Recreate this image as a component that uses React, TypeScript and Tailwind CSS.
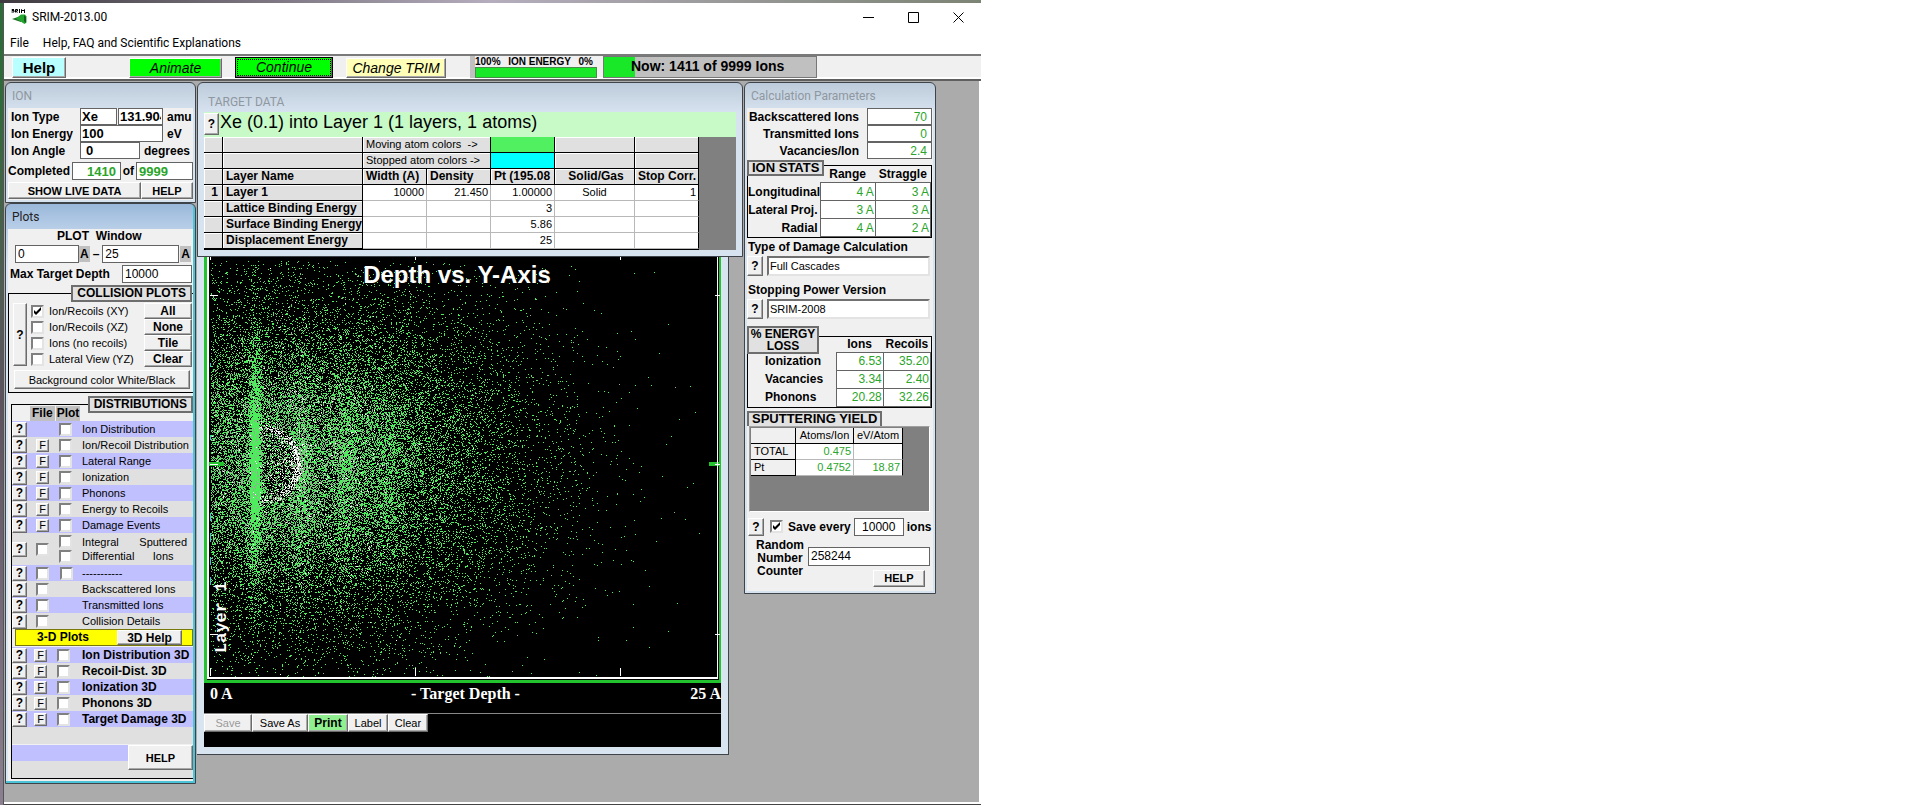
import type { ReactNode } from "react";

const raised =
  "border border-t-white border-l-white border-r-[#6b6b6b] border-b-[#6b6b6b] shadow-[inset_-1px_-1px_0_#a8a8a8] bg-[#f0f0f0]";
const field = "border border-[#646464] bg-white px-1 outline-none min-w-0";
const small = "text-[11px] font-normal";
const tag = "border-2 border-[#6e6e6e] bg-[#e1e1e1] leading-3";

function Win({ title, active, className = "", bodyPad = "px-[2px] pb-[2px]", titleClass = "h-[25px]", children }: {
  title: string; active?: boolean; className?: string; bodyPad?: string; titleClass?: string; children: ReactNode;
}) {
  return (
    <section
      className={`flex flex-col rounded-t-md border border-[#3f444a] ${bodyPad} ${active ? "bg-gradient-to-b from-[#9ab8da] via-[#b9cfe8] via-[25px] to-[#d9e6f3] to-[60px]" : "bg-gradient-to-b from-[#bccbda] to-[#d8e3f0] to-[30px]"} ${className}`}
    >
      <h2 className={`flex shrink-0 items-center pl-1 font-[Roboto,sans-serif] text-[12px] font-normal ${active ? "text-[#222]" : "text-[#8f979f]"} ${titleClass}`}>{title}</h2>
      {children}
    </section>
  );
}

function Check({ label, checked }: { label: string; checked?: boolean }) {
  return (
    <span className="relative block size-[13px] shrink-0">
      <input
        type="checkbox"
        aria-label={label}
        defaultChecked={checked}
        className="peer block size-[13px] appearance-none border-2 border-t-[#808080] border-l-[#808080] border-r-[#e3e3e3] border-b-[#e3e3e3] bg-white"
      />
      <svg viewBox="0 0 13 13" className="pointer-events-none absolute inset-0 hidden size-[13px] peer-checked:block">
        <path d="M3 5v3l2 2 5-5V2L5 7z" fill="#000" />
      </svg>
    </span>
  );
}

function Q({ className = "w-[15px] h-[15px]" }: { className?: string }) {
  return (
    <button type="button" aria-label="Explain" className={`${raised} flex shrink-0 items-center justify-center text-[12px] leading-3 font-bold ${className}`}>?</button>
  );
}

function IonPanel() {
  return (
    <Win title="ION" className="h-[121px]">
      <div className="flex flex-1 flex-col bg-[#f0f0f0] text-[12px] font-bold">
        <div className="grid grid-cols-[72px_minmax(0,1fr)] items-center">
          <label htmlFor="ion-type" className="pl-[3px]">Ion Type</label>
          <div className="flex items-center gap-px">
            <input id="ion-type" defaultValue="Xe" className={`${field} h-[17px] w-[37px] px-px text-[13px]`} />
            <input aria-label="Ion mass" defaultValue="131.904" className={`${field} h-[17px] w-[45px] px-px text-[13px]`} />
            <span className="pl-[3px]">amu</span>
          </div>
          <label htmlFor="ion-energy" className="pl-[3px]">Ion Energy</label>
          <div className="flex items-center gap-1">
            <input id="ion-energy" defaultValue="100" className={`${field} h-[17px] w-[83px] px-px text-[13px]`} />
            <span>eV</span>
          </div>
          <label htmlFor="ion-angle" className="pl-[3px]">Ion Angle</label>
          <div className="flex items-center gap-1">
            <input id="ion-angle" defaultValue="0" className={`${field} h-[17px] w-[60px] pl-[5px] text-[13px]`} />
            <span>degrees</span>
          </div>
        </div>
        <div className="mt-[3px] flex items-center justify-between">
          <label htmlFor="completed">Completed</label>
          <input id="completed" defaultValue="1410" className={`${field} h-[18px] w-[49px] px-0 text-right text-[13px] text-[#2aa52a]`} />
          <span>of</span>
          <input aria-label="Total ions" defaultValue="9999" className={`${field} h-[18px] w-[57px] pl-[2px] text-[13px] text-[#2aa52a]`} />
        </div>
        <div className="mt-[2px] flex text-[11px]">
          <button type="button" className={`${raised} h-[17px] flex-1 leading-3`}>SHOW LIVE DATA</button>
          <button type="button" className={`${raised} h-[17px] w-[52px] leading-3`}>HELP</button>
        </div>
      </div>
    </Win>
  );
}

const collisionPlots = ["Ion/Recoils (XY)", "Ion/Recoils (XZ)", "Ions (no recoils)", "Lateral View (YZ)"];
const distributions = [
  "Ion Distribution", "Ion/Recoil Distribution", "Lateral Range", "Ionization", "Phonons", "Energy to Recoils", "Damage Events",
];
const plots3d = ["Ion Distribution 3D", "Recoil-Dist. 3D", "Ionization 3D", "Phonons 3D", "Target Damage 3D"];

const rowCols = "grid grid-cols-[17px_24px_29px_minmax(0,1fr)] items-center";

function FButton() {
  return <button type="button" aria-label="File" className={`${raised} flex size-[13px] items-center justify-center ${small}`}>F</button>;
}

function PlotsPanel() {
  return (
    <Win title="Plots" active className="h-[581px] shadow-[inset_-2px_-2px_0_#4cc3d6]">
      <div className="flex flex-1 flex-col bg-[#f0f0f0] text-[12px] font-bold">
        <div className="h-4 pl-[49px] leading-[14px] whitespace-pre">PLOT  Window</div>
        <div className="flex h-[18px] items-center pl-[7px]">
          <input aria-label="Plot window start" defaultValue="0" className={`${field} text-[12px] font-normal h-[18px] w-[64px] pl-[2px]`} />
          <span className="bg-[#c0c0c0] px-px">A</span>
          <span className="px-[3px]">–</span>
          <input aria-label="Plot window end" defaultValue="25" className={`${field} text-[12px] font-normal h-[18px] w-[77px] pl-[2px]`} />
          <span className="ml-px bg-[#c0c0c0] px-px">A</span>
        </div>
        <div className="mt-[2px] flex items-center justify-between pr-px pl-[2px]">
          <label htmlFor="max-depth">Max Target Depth</label>
          <input id="max-depth" defaultValue="10000" className={`${field} text-[12px] font-normal h-[18px] w-[70px] pl-[2px]`} />
        </div>
        <div className="mt-[2px] grid grid-cols-1">
          <div className="col-start-1 row-start-1 mt-2 h-[100px] border border-r-0 border-black" />
          <div className="col-start-1 row-start-1 flex flex-col">
            <h3 className={`${tag} mr-px h-[17px] self-end px-1`}>COLLISION PLOTS</h3>
            <div className="mt-px flex pr-px pl-[5px]">
              <Q className="mr-1 h-[63px] w-[14px]" />
              <ul className={`flex flex-1 flex-col ${small}`}>
                {collisionPlots.map((p, i) => (
                  <li key={p} className="flex h-4 items-center gap-[5px] whitespace-nowrap">
                    <Check label={p} checked={i === 0} />
                    {p}
                  </li>
                ))}
              </ul>
              <div className="flex w-[48px] flex-col">
                {["All", "None", "Tile", "Clear"].map((b) => (
                  <button key={b} type="button" className={`${raised} h-4 leading-3`}>{b}</button>
                ))}
              </div>
            </div>
            <button type="button" className={`${raised} ${small} mt-[3px] ml-[6px] mr-[3px] h-[19px] leading-4`}>Background color White/Black</button>
          </div>
        </div>
        <div className="mt-[3px] grid flex-1 grid-cols-1">
          <div className="col-start-1 row-start-1 mt-2 ml-[3px] mb-[2px] border border-r-0 border-black bg-[#f0f0f0]" />
          <div className="col-start-1 row-start-1 mb-[3px] ml-1 flex flex-col">
            <div className="flex h-[25px] items-start justify-between">
              <div className="ml-[18px] flex gap-px self-end leading-[15px]">
                <span className="bg-[#c0c0c0] px-[2px]">File</span>
                <span className="bg-[#c0c0c0] px-px">Plot</span>
              </div>
              <h3 className={`${tag} z-10 h-[17px] px-1`}>DISTRIBUTIONS</h3>
            </div>
            <div className={small}>
              {distributions.map((d, i) => (
                <div key={d} className={`${rowCols} h-4 whitespace-nowrap ${i % 2 === 0 ? "bg-[#c0c0ff]" : "bg-[#e0e0e0]"}`}>
                  <Q />
                  <span className="pl-[7px]">{i > 0 && <FButton />}</span>
                  <span className="pl-[6px]"><Check label={d} /></span>
                  <span>{d}</span>
                </div>
              ))}
              <div className={`${rowCols} h-8 bg-[#e0e0e0]`}>
                <Q />
                <span className="pl-[7px]"><Check label="Sputtered ions file" /></span>
                <span className="flex flex-col gap-[2px] pl-[6px]"><Check label="Integral" /><Check label="Differential" /></span>
                <span className="flex justify-between pr-[6px] text-center leading-[14px]">
                  <span className="text-left">Integral<br />Differential</span>
                  <span>Sputtered<br />Ions</span>
                </span>
              </div>
              <div className={`${rowCols} h-4 bg-[#c0c0ff]`}>
                <Q />
                <span className="pl-[7px]"><Check label="Unused file" /></span>
                <span className="pl-[7px]"><Check label="Unused plot" /></span>
                <span>-----------</span>
              </div>
              {["Backscattered Ions", "Transmitted Ions", "Collision Details"].map((d, i) => (
                <div key={d} className={`${rowCols} h-4 ${i === 1 ? "bg-[#c0c0ff]" : "bg-[#e0e0e0]"}`}>
                  <Q />
                  <span className="pl-[7px]"><Check label={d} /></span>
                  <span />
                  <span>{d}</span>
                </div>
              ))}
            </div>
            <div className="ml-[3px] flex h-[17px] items-stretch border border-[#77770a] bg-[#ffff00]">
              <span className="w-[101px] pl-[21px] leading-[14px]">3-D Plots</span>
              <button type="button" className={`${raised} w-[65px] leading-3`}>3D Help</button>
            </div>
            <div className="mt-px">
              {plots3d.map((d, i) => (
                <div key={d} className={`${rowCols} h-4 whitespace-nowrap ${i % 2 === 0 ? "bg-[#c0c0ff]" : "bg-[#e0e0e0]"}`}>
                  <Q />
                  <span className="pl-[5px]"><FButton /></span>
                  <span className="pl-1"><Check label={d} /></span>
                  <span>{d}</span>
                </div>
              ))}
            </div>
            <div className="h-[17px] bg-[#e0e0e0]" />
            <div className="mt-px flex flex-1 bg-[#e0e0e0]">
              <div className="h-4 flex-1 bg-[#c0c0ff]" />
              <button type="button" className={`${raised} h-[25px] w-[65px] text-[11px]`}>HELP</button>
            </div>
          </div>
        </div>
      </div>
    </Win>
  );
}

const headCell = "h-4 border-r border-b border-black bg-[#e0e0e0] py-0 pr-0 pl-[3px] text-left font-bold shadow-[inset_1px_1px_0_#fff]";
const dataCell = `h-4 border-r border-b border-[#b8b8b8] bg-white px-[2px] py-0 text-right ${small}`;

function TargetPanel() {
  const rows: [string, string, string[]][] = [
    ["1", "Layer 1", ["10000", "21.450", "1.00000", "Solid", "1"]],
    ["", "Lattice Binding Energy", ["", "", "3", "", ""]],
    ["", "Surface Binding Energy", ["", "", "5.86", "", ""]],
    ["", "Displacement Energy", ["", "", "25", "", ""]],
  ];
  return (
    <Win title="TARGET DATA" className="h-[175px] w-[546px]" bodyPad="px-[6px]" titleClass="h-[29px] pt-[8px]">
      <div className="flex h-[25px] items-start bg-[#c8fac8] pt-px">
        <Q className="h-[22px] w-[15px]" />
        <p className="pl-px text-[18px] leading-[18px]">Xe (0.1) into Layer 1 (1 layers, 1 atoms)</p>
      </div>
      <div className="bg-[#808080]">
        <table className="w-[495px] table-fixed border-separate border-spacing-0 border-b border-black text-[12px] leading-[15px] whitespace-nowrap">
          <colgroup>
            <col className="w-[19px]" /><col className="w-[140px]" /><col className="w-[64px]" /><col className="w-[64px]" />
            <col className="w-[64px]" /><col className="w-[80px]" /><col className="w-[64px]" />
          </colgroup>
          <thead>
            <tr>
              <td className={headCell} /><td className={headCell} />
              <th colSpan={2} className={headCell}><span className={small}>Moving atom colors&nbsp; -&gt;</span></th>
              <td className="h-4 border-r border-b border-black bg-[#50f060] p-0" />
              <td className={headCell} /><td className={headCell} />
            </tr>
            <tr>
              <td className={headCell} /><td className={headCell} />
              <th colSpan={2} className={headCell}><span className={small}>Stopped atom colors -&gt;</span></th>
              <td className="h-4 border-r border-b border-black bg-[#00ffff] p-0" />
              <td className={headCell} /><td className={headCell} />
            </tr>
            <tr>
              <td className={headCell} />
              <th className={headCell}>Layer Name</th>
              <th className={headCell}>Width (A)</th>
              <th className={headCell}>Density</th>
              <th className={`${headCell} overflow-hidden`}>Pt (195.08</th>
              <th className={`${headCell} !text-center`}>Solid/Gas</th>
              <th className={headCell}>Stop Corr.</th>
            </tr>
          </thead>
          <tbody>
            {rows.map(([n, name, cells]) => (
              <tr key={name}>
                <th className={`${headCell} !pr-1 !text-right`}>{n}</th>
                <th className={headCell}>{name}</th>
                {cells.map((c, i) => (
                  <td key={i} className={`${dataCell} ${i === 3 ? "!text-center" : ""} ${i === 4 ? "!border-r-black" : ""}`}>{c}</td>
                ))}
              </tr>
            ))}
          </tbody>
        </table>
      </div>
    </Win>
  );
}

const PLOT_W = 517;
const PLOT_H = 426;

/* Cascade density: lattice planes appear as vertical bands over a broad cloud. */
function scatter() {
  let seed = 20130711;
  const rnd = () => {
    seed = (seed + 0x6d2b79f5) | 0;
    let t = Math.imul(seed ^ (seed >>> 15), 1 | seed);
    t = (t + Math.imul(t ^ (t >>> 7), 61 | t)) ^ t;
    return ((t ^ (t >>> 14)) >>> 0) / 4294967296;
  };
  const bands = [[46, 4, 0.62, 118], [92, 7, 0.26, 100], [137, 8, 0.24, 92], [177, 11, 0.16, 84]];
  let green = "";
  let gray = "";
  let white = "";
  for (let y = 4; y < PLOT_H - 6; y++) {
    const v = y - 207;
    const tail = Math.exp(-Math.pow(Math.abs(v) / 165, 3.2));
    for (let x = 7; x < PLOT_W - 7; x++) {
      const u = x - 5;
      const fall = Math.exp(-Math.pow(Math.abs(v) / 112, 2.2));
      const reach = Math.exp(-Math.pow(u / 240, 2.7));
      let p = 0.5 * reach * fall * (0.7 + 0.3 * Math.min(1, u / 60)) + 0.04 * reach * tail;
      p += 0.018 * Math.exp(-Math.pow(Math.hypot(u - 60, v) / 215, 5));
      p += 0.018 * Math.exp(-Math.pow(Math.hypot(u - 60, v * 1.15) / 285, 6));
      p += 0.0014 * Math.exp(-Math.pow(Math.hypot(u, v * 1.3) / 430, 10));
      for (const [c, s, a, h] of bands) {
        p += a * Math.exp(-((u - c) * (u - c)) / (2 * s * s)) * Math.exp(-(v * v) / (h * h));
      }
      const r = Math.hypot((u - 50) / 42, v / 40);
      const ring = u > 50 ? Math.exp(-Math.pow((r - 0.93) / 0.08, 2)) : 0;
      const inside = u > 53 && r < 1 ? (u - 53) / 41 : 0;
      if (u > 53 && r < 0.9) p *= 0.8;
      const k = rnd();
      if (k < p + ring * 0.08) {
        const near = Math.exp(-Math.pow(Math.hypot(u - 75, v * 0.9) / 110, 2));
        const offBand = Math.abs(u - 46) < 7 ? 0.3 : 1;
        const j = rnd();
        const dot = `M${x} ${y}h1`;
        if (j < 0.06 * near * offBand + ring * 0.35 + inside * 0.3) white += dot;
        else if (j < 0.07 + 0.36 * near * offBand + ring * 0.45 + inside * 0.3) gray += dot;
        else green += dot;
      }
    }
  }
  return { green, gray, white };
}
const dots = scatter();

function PlotPanel() {
  return (
    <section className="flex h-[498px] w-[532px] flex-col border-r border-b border-[#3f444a] bg-[#d9e4f1] px-[7px] pb-[7px]">
      <div className="flex flex-1 flex-col bg-black">
        <svg viewBox={`0 0 ${PLOT_W} ${PLOT_H}`} className="block w-full" role="img" aria-label="Depth vs. Y-Axis">
          <g shapeRendering="crispEdges" transform="translate(0 .5)" fill="none">
            <path d={dots.green} stroke="#4cee5c" />
            <path d={dots.gray} stroke="#93ad90" />
            <path d={dots.white} stroke="#fff" />
          </g>
          <g shapeRendering="crispEdges">
            <path d="M0 0h3v426h-3zM515 0h2v426h-2zM0 423h517v3h-517zM5 205h15v4h-15zM505 205h12v4h-12z" fill="#22c32e" />
            <path d="M3 0h2v422h-2zM513 0h1v422h-1zM3 420h511v2h-511zM6 411h1v8h-1zM211 411h1v8h-1zM416 411h1v8h-1zM6 0h1v3h-1zM211 0h1v3h-1zM416 0h1v3h-1zM6 38h8v1h-8zM511 38h5v1h-5zM6 207h8v1h-8zM511 207h5v1h-5zM6 377h8v1h-8zM511 377h5v1h-5z" fill="#fff" />
            <path d="M6 106v4M6 178v5M6 256v8M6 276v9M6 300v8M6 320v8" stroke="#35c8d8" />
          </g>
          <text x="253" y="26" textAnchor="middle" className="fill-white font-['Liberation_Sans',sans-serif] text-[24px] font-bold">Depth vs. Y-Axis</text>
          <text transform="translate(22 396) rotate(-90)" className="fill-white font-['Liberation_Mono',monospace] text-[17px] font-bold">Layer 1</text>
        </svg>
        <div className="grid h-[30px] grid-cols-[1fr_auto_1fr] pl-[6px] font-['Liberation_Serif',serif] text-[16px] leading-[21px] font-bold text-white">
          <span>0 A</span>
          <span className="text-center">- Target Depth -</span>
          <span className="text-right">25 A</span>
        </div>
        <div className={`flex border-t border-[#888] ${small}`}>
          <button type="button" disabled className={`${raised} h-[18px] w-[48px] leading-[15px] text-[#9a9a9a]`}>Save</button>
          <button type="button" className={`${raised} h-[18px] w-[56px] leading-[15px]`}>Save As</button>
          <button type="button" className={`${raised} h-[18px] w-[40px] !bg-[#90f090] text-[12px] leading-[15px] !font-bold`}>Print</button>
          <button type="button" className={`${raised} h-[18px] w-[40px] leading-[15px]`}>Label</button>
          <button type="button" className={`${raised} h-[18px] w-[40px] leading-[15px]`}>Clear</button>
        </div>
      </div>
    </section>
  );
}

const greenCell = "border border-[#646464] bg-white p-0 pr-px text-right text-[12px] font-normal text-[#2aa52a]";
const sunken = "border-2 border-t-[#707070] border-l-[#707070] border-r-[#e3e3e3] border-b-[#e3e3e3] bg-white px-px";

function CalcPanel() {
  return (
    <Win title="Calculation Parameters" className="h-[512px] w-[192px]">
      <div className="flex flex-1 flex-col bg-[#f0f0f0] text-[12px] font-bold">
        {[["Backscattered Ions", "70"], ["Transmitted Ions", "0"], ["Vacancies/Ion", "2.4"]].map(([l, v]) => (
          <div key={l} className="flex h-[17px] items-center justify-end gap-2 pr-px">
            <label htmlFor={l}>{l}</label>
            <input id={l} defaultValue={v} className={`${field} h-[17px] w-[65px] px-0 text-right font-normal text-[#2aa52a]`} />
          </div>
        ))}
        <div className="mt-px mr-px grid grid-cols-1">
          <h3 className={`${tag} z-10 col-start-1 row-start-1 h-4 self-start justify-self-start px-[3px] text-[13px]`}>ION STATS</h3>
          <div className="col-start-1 row-start-1 mt-[5px] border border-black">
            <table className="w-full table-fixed border-collapse leading-4">
              <colgroup><col className="w-[72px]" /><col /><col /></colgroup>
              <thead>
                <tr className="h-4"><td className="p-0" /><th className="p-0">Range</th><th className="p-0">Straggle</th></tr>
              </thead>
              <tbody>
                {[["Longitudinal", "4 A", "3 A"], ["Lateral Proj.", "3 A", "3 A"], ["Radial", "4 A", "2 A"]].map(([l, a, b]) => (
                  <tr key={l} className="h-[18px]">
                    <th className="p-0 pr-[2px] text-right whitespace-nowrap">{l}</th>
                    <td className={greenCell}>{a}</td>
                    <td className={greenCell}>{b}</td>
                  </tr>
                ))}
              </tbody>
            </table>
          </div>
        </div>
        <label htmlFor="damage" className="pl-px leading-[18px]">Type of Damage Calculation</label>
        <div className="flex gap-1 pr-[3px]">
          <Q className="h-5 w-4" />
          <input id="damage" defaultValue="Full Cascades" className={`${sunken} ${small} h-5 min-w-0 flex-1`} />
        </div>
        <label htmlFor="stopping" className="mt-[5px] pl-px leading-[18px]">Stopping Power Version</label>
        <div className="flex gap-1 pr-[3px]">
          <Q className="h-5 w-4" />
          <input id="stopping" defaultValue="SRIM-2008" className={`${sunken} ${small} h-5 min-w-0 flex-1`} />
        </div>
        <div className="mt-[7px] mr-px grid grid-cols-1">
          <h3 className={`${tag} z-10 col-start-1 row-start-1 w-[72px] self-start justify-self-start text-center whitespace-nowrap`}>% ENERGY<br />LOSS</h3>
          <div className="col-start-1 row-start-1 mt-[10px] border border-black">
            <table className="w-full table-fixed border-collapse leading-4">
              <colgroup><col className="w-[88px]" /><col /><col /></colgroup>
              <thead>
                <tr className="h-[15px] leading-[14px]"><td className="p-0" /><th className="p-0">Ions</th><th className="p-0">Recoils</th></tr>
              </thead>
              <tbody>
                {[["Ionization", "6.53", "35.20"], ["Vacancies", "3.34", "2.40"], ["Phonons", "20.28", "32.26"]].map(([l, a, b]) => (
                  <tr key={l} className="h-[18px]">
                    <th className="p-0 pl-[17px] text-left">{l}</th>
                    <td className={greenCell}>{a}</td>
                    <td className={greenCell}>{b}</td>
                  </tr>
                ))}
              </tbody>
            </table>
          </div>
        </div>
        <h3 className={`${tag} mt-[3px] h-[15px] self-start border-b-0 px-[3px] text-[13px]`}>SPUTTERING YIELD</h3>
        <div className="mr-[3px] ml-[2px] h-[86px] border border-t-[#a0a0a0] border-l-[#a0a0a0] border-r-white border-b-white bg-[#808080] pt-px pl-px">
          <table className={`w-[152px] table-fixed border-separate border-spacing-0 ${small} leading-[15px]`}>
            <colgroup><col className="w-[45px]" /><col className="w-[58px]" /><col className="w-[49px]" /></colgroup>
            <thead>
              <tr className="bg-[#f0f0f0]">
                <td className="h-4 border-r border-b border-black p-0" />
                <th className="h-4 border-r border-b border-black p-0 font-normal">Atoms/Ion</th>
                <th className="h-4 border-r border-b border-black p-0 font-normal">eV/Atom</th>
              </tr>
            </thead>
            <tbody>
              {[["TOTAL", "0.475", ""], ["Pt", "0.4752", "18.87"]].map(([l, a, b]) => (
                <tr key={l}>
                  <th className="h-4 border-r border-b border-black bg-[#f0f0f0] p-0 pl-[3px] text-left font-normal">{l}</th>
                  <td className="h-4 border-r border-b border-r-[#b8b8b8] border-b-[#b8b8b8] bg-white p-0 pr-[2px] text-right text-[#2aa52a]">{a}</td>
                  <td className="h-4 border-r border-b border-r-black border-b-[#b8b8b8] bg-white p-0 pr-[2px] text-right text-[#2aa52a]">{b}</td>
                </tr>
              ))}
            </tbody>
          </table>
        </div>
        <div className="mt-[6px] flex h-[18px] items-center pl-px">
          <Q className="h-[18px] w-4" />
          <span className="ml-[6px]"><Check label="Save every" checked /></span>
          <label htmlFor="save-every" className="ml-[5px] whitespace-nowrap">Save every</label>
          <input id="save-every" defaultValue="10000" className={`${field} mx-[3px] h-[18px] w-[50px] text-center text-[12px] font-normal`} />
          <span>ions</span>
        </div>
        <div className="mt-[3px] flex items-center pr-[3px] pl-[8px]">
          <label htmlFor="counter" className="w-[50px] text-center leading-[13px]">Random<br />Number<br />Counter</label>
          <input id="counter" defaultValue="258244" className={`${field} mb-1 ml-[3px] h-[19px] flex-1 pl-[2px] text-[12px] font-normal`} />
        </div>
        <button type="button" className={`${raised} -mt-2 mr-2 h-[17px] w-[52px] self-end text-[11px] leading-3`}>HELP</button>
      </div>
    </Win>
  );
}

function Toolbar() {
  return (
    <div className="flex h-[27px] items-start border-t-2 border-b-2 border-t-[#7a7a7a] border-b-[#5f5f5f] bg-[#f0f0f0] shadow-[inset_0_-2px_0_#fff]">
      <button type="button" className={`${raised} mt-px ml-2 h-[21px] w-[54px] !bg-[#b8ffff] text-[15px] leading-4 font-bold`}>Help</button>
      <button type="button" className={`${raised} mt-[2px] ml-[63px] h-[20px] w-[93px] !bg-[#00ff00] text-[14px] leading-4 italic`}>Animate</button>
      <button type="button" className="mt-px ml-[13px] h-[21px] w-[98px] border border-black bg-[#00ff00] p-px text-[14px] italic shadow-[inset_-1px_-1px_0_#6b6b6b]">
        <span className="block h-[17px] border border-dotted border-black leading-[15px]">Continue</span>
      </button>
      <button type="button" className={`${raised} mt-[2px] ml-[13px] h-[20px] w-[100px] !bg-[#ffffb8] text-[14px] leading-4 italic`}>Change TRIM</button>
      <div className="ml-[24px] w-[128px] border-l-[5px] border-[#c0c0c0] pr-px">
        <div className="flex justify-between pr-1 text-[10px] leading-[11px] font-bold"><span>100%</span><span>ION ENERGY</span><span>0%</span></div>
        <div className="h-[11px] border border-[#4a8a4a] bg-[#18e828]" />
      </div>
      <div className="ml-[5px] flex h-[22px] w-[214px] border border-[#777] bg-[#c0c0c0]">
        <div className="h-full w-[31px] shrink-0 bg-[#18e828]" />
        <span className="-ml-1 text-[14px] leading-[19px] font-bold whitespace-nowrap">Now: 1411 of 9999 Ions</span>
      </div>
    </div>
  );
}

export default function App() {
  return (
    <div className="min-h-screen bg-white font-['Liberation_Sans',Arial,sans-serif] leading-4 text-black">
      <div className="flex min-h-screen w-[51.25%] min-w-[960px] flex-col bg-gradient-to-r from-[#3f3a40] via-[#b5adbd] to-[#7c8474] pt-[3px]">
        <div className="flex flex-1 bg-gradient-to-b from-[#2d6b38] from-[100px] via-[#5d5260] to-[#8a8090] pl-[3px]">
          <div className="flex flex-1 flex-col border-l border-[#555] bg-white">
            <header className="flex h-[28px] items-center pl-[7px] font-[Roboto,sans-serif] text-[12px]">
              <svg viewBox="0 0 16 16" className="mr-[5px] size-4" aria-hidden="true">
                <path d="M3 .5H1v1h2v1.500H.5M4.500 3.500V.5h2v1.500h-2l2 1.500M8.500 0v4M10.500 4V.5l1.500 1.500 1.500-1.500V4" stroke="#000" strokeWidth="1" fill="none" />
                <path d="M1 10l9-3v6z" fill="#1d6b23" />
                <path d="M5 9.500 10 5.500h4l1.500 2v6l-2 1.500z" fill="#21a52e" />
                <path d="M13 6l2 2v6l-2-2z" fill="#135c1b" />
              </svg>
              <h1 className="flex-1">SRIM-2013.00</h1>
              <div className="flex gap-[34px] pr-[17px]">
                {[["Minimize", "M0 5.500h11"], ["Maximize", "M.5.500h10v10h-10z"], ["Close", "M.5.500l10 10M10.500.500l-10 10"]].map(([l, d]) => (
                  <button key={l} type="button" aria-label={l}>
                    <svg viewBox="0 0 11 11" className="block size-[11px]"><path d={d} stroke="#000" fill="none" /></svg>
                  </button>
                ))}
              </div>
            </header>
            <nav className="flex h-[23px] items-center gap-[14px] pl-[6px] font-[Roboto,sans-serif] text-[12px]">
              <a href="#file">File</a>
              <a href="#help">Help, FAQ and Scientific Explanations</a>
            </nav>
            <Toolbar />
            <main className="flex flex-1 items-start gap-px border-r-2 border-b-2 border-white bg-[#ababab] pt-px pl-px">
              <div className="flex w-[191px] flex-col">
                <IonPanel />
                <PlotsPanel />
              </div>
              <div className="flex flex-col">
                <TargetPanel />
                <PlotPanel />
              </div>
              <CalcPanel />
            </main>
            <div className="h-px bg-[#444]" />
          </div>
        </div>
      </div>
    </div>
  );
}
